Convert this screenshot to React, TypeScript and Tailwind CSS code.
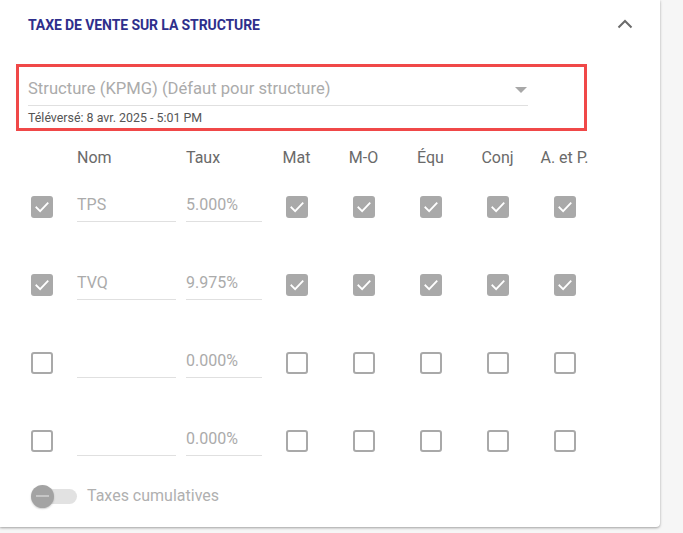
import React from "react";

const font = { fontFamily: "Roboto, 'Noto Sans', sans-serif" };

function Check({ checked }: { checked: boolean }) {
  if (checked) {
    return (
      <div className="w-[22px] h-[22px] rounded-[3px] bg-[#a9a9a9] flex items-center justify-center">
        <svg width="18" height="18" viewBox="0 0 24 24" fill="none">
          <path d="M4.5 12.5l5 5L19.5 7" stroke="white" strokeWidth="2.4" strokeLinecap="square" />
        </svg>
      </div>
    );
  }
  return <div className="w-[22px] h-[22px] rounded-[3px] border-2 border-[#a9a9a9] bg-white" />;
}

const rows = [
  { on: true, name: "TPS", rate: "5.000%", cols: [true, true, true, true, true] },
  { on: true, name: "TVQ", rate: "9.975%", cols: [true, true, true, true, true] },
  { on: false, name: "", rate: "0.000%", cols: [false, false, false, false, false] },
  { on: false, name: "", rate: "0.000%", cols: [false, false, false, false, false] },
];

const heads = ["Mat", "M-O", "Équ", "Conj", "A. et P."];

export default function App() {
  return (
    <div className="w-[683px] h-[533px] bg-[#f6f6f6] overflow-hidden" style={font}>
      <div className="w-[660px] h-[527px] bg-white rounded-br-[4px] shadow-[0_1px_3px_rgba(0,0,0,0.25),0_1px_2px_rgba(0,0,0,0.12)] px-4">
        <div className="h-[50px] flex items-center justify-between">
          <div className="ml-3 text-[14px] font-bold text-[#2e2f8c] tracking-[-0.1px]">TAXE DE VENTE SUR LA STRUCTURE</div>
          <svg width="16" height="10" viewBox="0 0 16 10" className="mr-[11px] -mt-[2px]" fill="none">
            <path d="M1.5 8.5L8 2l6.5 6.5" stroke="#6b6b6b" strokeWidth="2" />
          </svg>
        </div>
        <div className="mt-[14px] w-[571px] h-[67px] border-[3px] border-[#f04848] pl-[9px] pt-[10px]">
          <div className="w-[500px] h-[29px] border-b border-[#e0e0e0] flex items-start justify-between">
            <span className="text-[16.6px] leading-[24px] text-[#ababab]">Structure (KPMG) (Défaut pour structure)</span>
            <svg width="12" height="8" viewBox="0 0 12 8" className="mt-[9px] mr-[1px]">
              <path d="M0 1h12L6 7z" fill="#a8a8a8" />
            </svg>
          </div>
          <div className="mt-[5px] text-[12.4px] leading-[14px] text-[#555]">Téléversé: 8 avr. 2025 - 5:01 PM</div>
        </div>
        <div className="ml-[15px] mt-[15px]">
          <div className="grid grid-cols-[46px_109px_77px_repeat(5,67px)] h-[22px] items-center text-[16px] text-[#6a6a6a]">
            <div />
            <div>Nom</div>
            <div>Taux</div>
            {heads.map((h) => (
              <div key={h} className="text-center">{h}</div>
            ))}
          </div>
          {rows.map((r, i) => (
            <div key={i} className="grid grid-cols-[46px_109px_77px_repeat(5,67px)] h-[78px] items-center">
              <div><Check checked={r.on} /></div>
              <div className="pr-[10px]">
                <div className="h-[30px] border-b border-[#e0e0e0] flex items-center pb-[4px] text-[16px] text-[#ababab]">{r.name}</div>
              </div>
              <div className="pr-[1px]">
                <div className="h-[30px] border-b border-[#e0e0e0] flex items-center pb-[4px] text-[16px] text-[#ababab]">{r.rate}</div>
              </div>
              {r.cols.map((c, j) => (
                <div key={j} className="flex justify-center"><Check checked={c} /></div>
              ))}
            </div>
          ))}
          <div className="h-[32px] flex items-center">
            <div className="relative w-[47px] h-[23px] flex items-center">
              <div className="absolute left-[8px] w-[38px] h-[15px] rounded-full bg-[#e2e2e2]" />
              <div className="relative w-[23px] h-[23px] rounded-full bg-[#a3a3a3] shadow-[0_1px_2px_rgba(0,0,0,0.2)] flex items-center justify-center">
                <div className="w-[13px] h-[2px] bg-[#c6c6c6]" />
              </div>
            </div>
            <span className="ml-[9px] text-[16px] text-[#b0b0b0]">Taxes cumulatives</span>
          </div>
        </div>
      </div>
    </div>
  );
}
